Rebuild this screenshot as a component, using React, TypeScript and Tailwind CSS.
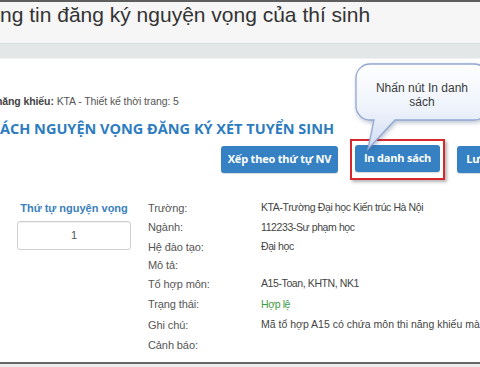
const rows: { label: string; value: string; h: string; tone?: string; wide?: boolean }[] = [
  { label: "Trường:", value: "KTA-Trường Đại học Kiến trúc Hà Nội", h: "h-[20px]" },
  { label: "Ngành:", value: "112233-Sư phạm học", h: "h-[19px]" },
  { label: "Hệ đào tạo:", value: "Đại học", h: "h-[20px]" },
  { label: "Mô tả:", value: "", h: "h-[17px]" },
  { label: "Tổ hợp môn:", value: "A15-Toan, KHTN, NK1", h: "h-[20px]" },
  { label: "Trạng thái:", value: "Hợp lệ", h: "h-[21px]", tone: "text-[#3f9b3f]" },
  {
    label: "Ghi chú:",
    value: "Mã tổ hợp A15 có chứa môn thi năng khiếu mà thí sinh chưa đăng ký",
    h: "h-[20px]",
    wide: true,
  },
  { label: "Cảnh báo:", value: "", h: "h-[20px]" },
];

function Callout() {
  return (
    <div className="absolute left-[350px] top-[60px] h-[95px] w-[145px]">
      <svg
        width="145"
        height="95"
        viewBox="0 0 145 95"
        className="absolute left-0 top-0 drop-shadow-[1px_2px_2px_rgba(60,80,120,0.35)]"
      >
        <defs>
          <linearGradient id="bubble" x1="0" y1="0" x2="0" y2="1">
            <stop offset="0" stopColor="#ffffff" />
            <stop offset="0.55" stopColor="#edf2fb" />
            <stop offset="1" stopColor="#cfdcf2" />
          </linearGradient>
        </defs>
        <path
          d="M20 4 H124 A14 14 0 0 1 138 18 V46 A14 14 0 0 1 124 60 H45 L18 89 L24 60 H20 A14 14 0 0 1 6 46 V18 A14 14 0 0 1 20 4 Z"
          fill="url(#bubble)"
          stroke="#93a8d2"
          strokeWidth="1.3"
        />
      </svg>
      <div className="absolute left-[6px] top-[21px] w-[132px] text-center font-['Liberation_Sans',Arial,sans-serif] text-[12px] leading-[14px] text-[#3a3a3a]">
        Nhấn nút In danh
        <br />
        sách
      </div>
    </div>
  );
}

function Btn({ children, w }: { children: React.ReactNode; w: string }) {
  return (
    <button
      className={`${w} h-[27px] shrink-0 overflow-hidden whitespace-nowrap rounded-[3px] bg-[#3581c3] font-['Open_Sans',sans-serif] text-[11px] font-bold tracking-[-0.2px] text-white shadow-[0_1px_1px_rgba(0,0,0,0.15)]`}
    >
      {children}
    </button>
  );
}

export default function App() {
  return (
    <div className="relative flex h-[367px] w-[480px] flex-col overflow-hidden bg-white font-['Liberation_Sans',Arial,sans-serif]">
      <div className="h-[2px] bg-[#5e5e5e]" />
      <div className="h-[41px] bg-[#f6f6f6] pt-[1px]">
        <h1 className="whitespace-nowrap text-[21px] leading-[24px] text-[#333]">
          ng tin đăng ký nguyện vọng của thí sinh
        </h1>
      </div>
      <div className="h-px bg-[#d9dcdd]" />
      <div className="h-[14px] bg-[#e4e7e8]" />
      <div className="h-px bg-[#eef0f1]" />

      <div className="flex h-[303px] flex-col bg-white">
        <p className="-ml-[4px] mt-[35px] whitespace-nowrap text-[10.5px] leading-[14px] tracking-[-0.1px] text-[#555]">
          <span className="font-bold text-[#444]">năng khiếu:</span> KTA - Thiết kế thời trang: 5
        </p>
        <h2 className="mt-[12px] whitespace-nowrap font-['Open_Sans',sans-serif] text-[14.5px] font-bold leading-[18px] text-[#2d7cc0]">
          ÁCH NGUYỆN VỌNG ĐĂNG KÝ XÉT TUYỂN SINH
        </h2>

        <div className="ml-[221px] mt-[1px] flex items-center gap-[12px]">
          <Btn w="w-[117px]">Xếp theo thứ tự NV</Btn>
          <div className="shrink-0 border-2 border-[#d7282e] px-[3px] pb-[6px] pt-[4px] shadow-[2px_2px_3px_rgba(0,0,0,0.3)]">
            <Btn w="w-[85px]">In danh sách</Btn>
          </div>
          <Btn w="w-[110px]">Lưu nguyện vọng</Btn>
        </div>

        <div className="mt-[18px] flex">
          <div className="ml-[17px] flex w-[114px] flex-col items-center">
            <div className="flex h-[20px] items-center whitespace-nowrap text-[11px] font-bold text-[#3a80bd]">
              Thứ tự nguyện vọng
            </div>
            <div className="mt-[3px] flex h-[29px] w-[114px] items-center justify-center rounded-[3px] border border-[#cfcfcf] bg-white text-[11px] text-[#555] shadow-[inset_0_1px_1px_rgba(0,0,0,0.06)]">
              1
            </div>
          </div>
          <div className="ml-[17px] flex flex-col">
            {rows.map((r) => (
              <div key={r.label} className={`flex items-center ${r.h}`}>
                <span className="w-[113px] shrink-0 text-[11px] tracking-[-0.1px] text-[#555]">
                  {r.label}
                </span>
                <span
                  className={`whitespace-nowrap text-[10.5px] ${
                    r.wide ? "tracking-[0px]" : "tracking-[-0.4px]"
                  } ${r.tone ?? "text-[#444]"}`}
                >
                  {r.value}
                </span>
              </div>
            ))}
          </div>
        </div>
      </div>

      <div className="h-[2px] bg-[#666]" />
      <div className="flex-1 bg-[#ececec]" />

      <Callout />
    </div>
  );
}
